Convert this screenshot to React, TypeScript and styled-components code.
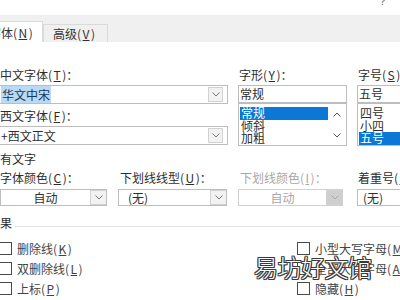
import React from "react";
import styled, { createGlobalStyle } from "styled-components";

const Global = createGlobalStyle`
  html, body { margin: 0; padding: 0; background: #fff; }
  body { width: 400px; height: 300px; overflow: hidden; }
`;

const Page = styled.div`
  position: relative;
  width: 400px;
  height: 300px;
  overflow: hidden;
  background: #fff;
  font-family: "Noto Sans CJK SC", "Noto Sans", sans-serif;
  font-size: 12px;
  color: #2e2e2e;
`;

const Dialog = styled.div`
  margin-left: -12px;
  width: 440px;
`;

const TitleBar = styled.div`
  height: 15px;
  padding-left: 391px;
  overflow: hidden;
  background: #fff;
`;

const Help = styled.span`
  display: block;
  font-family: "Liberation Sans", sans-serif;
  font-size: 13px;
  line-height: 13px;
  margin-top: -6px;
  color: #7a7a7a;
`;

const TabStrip = styled.div`
  height: 27px;
  background: #f0f0f0;
  display: flex;
  align-items: flex-end;
`;

const Tab = styled.div<{ $active?: boolean }>`
  box-sizing: border-box;
  height: ${(p) => (p.$active ? 21 : 18)}px;
  width: ${(p) => (p.$active ? 63 : 65)}px;
  margin-left: ${(p) => (p.$active ? -8 : 0)}px;
  padding-left: ${(p) => (p.$active ? 8 : 9)}px;
  background: ${(p) => (p.$active ? "#fff" : "#f0f0f0")};
  border: 1px solid #dadada;
  border-bottom: none;
  display: flex;
  align-items: center;
  white-space: nowrap;
  color: #333;
`;

const Content = styled.div`
  background: #fff;
`;

const FontGrid = styled.div`
  display: grid;
  grid-template-columns: 229px 109px 80px;
  column-gap: 10px;
  padding-left: 11px;
  padding-top: 25px;
`;

const Column = styled.div`
  display: flex;
  flex-direction: column;
`;

const Label = styled.div<{ $disabled?: boolean; $gap?: number }>`
  height: 16px;
  line-height: 16px;
  padding-left: 1px;
  margin-top: ${(p) => p.$gap ?? 0}px;
  white-space: nowrap;
  color: ${(p) => (p.$disabled ? "#a8a8a8" : "#2e2e2e")};
`;

const Combo = styled.div<{ $h: number }>`
  box-sizing: border-box;
  height: ${(p) => p.$h}px;
  margin-top: 2px;
  border: 1px solid #bdbdbd;
  display: flex;
  align-items: center;
  padding-left: 1px;
  background: #fff;
  white-space: nowrap;
  overflow: hidden;
`;

const ComboText = styled.span<{ $selected?: boolean }>`
  flex: 1;
  line-height: 14px;
  & > em {
    font-style: normal;
    background: ${(p) => (p.$selected ? "#b9d9f5" : "transparent")};
    color: ${(p) => (p.$selected ? "#16365a" : "inherit")};
    padding: 0 1px;
  }
`;

const ArrowBox = styled.div<{ $flush?: boolean; $disabled?: boolean }>`
  box-sizing: border-box;
  width: ${(p) => (p.$flush ? 16 : 15)}px;
  height: ${(p) => (p.$flush ? "100%" : "15px")};
  margin-right: ${(p) => (p.$flush ? 0 : 4)}px;
  border: 1px solid #d2d2d2;
  border-right: ${(p) => (p.$flush ? "none" : "1px solid #d2d2d2")};
  background: ${(p) => (p.$disabled ? "#cfcfcf" : "#f2f2f2")};
  display: flex;
  align-items: center;
  justify-content: center;
  flex-shrink: 0;
`;

const ListBox = styled.div`
  box-sizing: border-box;
  height: 43px;
  border: 1px solid #bdbdbd;
  display: flex;
  overflow: hidden;
`;

const ListItems = styled.div`
  flex: 1;
  padding-top: 3px;
  padding-left: 1px;
  display: flex;
  flex-direction: column;
`;

const ListItem = styled.div<{ $selected?: boolean }>`
  height: 12.5px;
  line-height: 12.5px;
  padding-left: 1px;
  white-space: nowrap;
  background: ${(p) => (p.$selected ? "#0a78d4" : "transparent")};
  color: ${(p) => (p.$selected ? "#fff" : "#2e2e2e")};
`;

const ScrollBar = styled.div`
  width: 18px;
  display: flex;
  flex-direction: column;
  align-items: center;
  justify-content: space-between;
  padding: 8px 0 7px;
  box-sizing: border-box;
`;

const GroupHeader = styled.div<{ $line?: boolean; $gap: number }>`
  display: flex;
  align-items: flex-start;
  height: 14px;
  line-height: 14px;
  margin-top: ${(p) => p.$gap}px;
  white-space: nowrap;
  &::after {
    content: "";
    display: ${(p) => (p.$line ? "block" : "none")};
    flex: 1;
    height: 1px;
    margin-top: 10px;
    margin-left: 3px;
    background: #e2e2e2;
  }
`;

const DropGrid = styled.div`
  display: grid;
  grid-template-columns: 107px 109px 108px 60px;
  column-gap: 11px;
  padding-left: 12px;
  margin-top: 5px;
`;

const DropLabel = styled.div<{ $disabled?: boolean; $shift?: number }>`
  height: 14px;
  line-height: 14px;
  white-space: nowrap;
  padding-left: ${(p) => p.$shift ?? 0}px;
  color: ${(p) => (p.$disabled ? "#a8a8a8" : "#2e2e2e")};
`;

const Drop = styled.div<{ $disabled?: boolean; $w?: number }>`
  box-sizing: border-box;
  height: 17px;
  margin-top: 4px;
  width: ${(p) => (p.$w ? `${p.$w}px` : "auto")};
  border: 1px solid ${(p) => (p.$disabled ? "#d0d0d0" : "#bdbdbd")};
  display: flex;
  align-items: center;
  background: #fff;
  white-space: nowrap;
  overflow: hidden;
  color: ${(p) => (p.$disabled ? "#a8a8a8" : "#2e2e2e")};
`;

const DropText = styled.span<{ $center?: boolean; $pad?: number }>`
  flex: 1;
  text-align: ${(p) => (p.$center ? "center" : "left")};
  padding-left: ${(p) => (p.$center ? 0 : p.$pad ?? 9)}px;
  line-height: 14px;
`;

const Effects = styled.div`
  display: grid;
  grid-template-columns: 298px 1fr;
  grid-auto-flow: column;
  grid-template-rows: repeat(4, 20px);
  padding-left: 11px;
  margin-top: 8px;
`;

const CheckRow = styled.div`
  display: flex;
  align-items: center;
  height: 20px;
  white-space: nowrap;
  color: #444;
`;

const Box = styled.span`
  box-sizing: border-box;
  width: 13px;
  height: 13px;
  border: 1px solid #4a4a4a;
  background: #fff;
  margin-right: 5px;
  flex-shrink: 0;
`;

const Access = styled.u`
  margin: 0 1.5px;
`;

const Watermark = styled.div`
  position: absolute;
  left: 254px;
  top: 252px;
  font-family: "Noto Sans CJK SC", sans-serif;
  font-weight: 300;
  font-size: 24px;
  line-height: 30px;
  letter-spacing: -0.5px;
  color: #fff;
  text-shadow: 1px 0 0 #3a3a3a, -1px 0 0 #3a3a3a, 0 1px 0 #3a3a3a, 0 -1px 0 #3a3a3a,
    1px 1px 0 #3a3a3a, -1px -1px 0 #3a3a3a, 1px -1px 0 #3a3a3a, -1px 1px 0 #3a3a3a;
  white-space: nowrap;
`;

const Chevron = ({ up, color = "#777" }: { up?: boolean; color?: string }) => (
  <svg width="8" height="5" viewBox="0 0 8 5">
    <path
      d={up ? "M0.5 4.5 L4 1 L7.5 4.5" : "M0.5 0.5 L4 4 L7.5 0.5"}
      fill="none"
      stroke={color}
      strokeWidth="1"
    />
  </svg>
);

const K = ({ c }: { c: string }) => (
  <>
    (<Access>{c}</Access>)
  </>
);

export default function App() {
  return (
    <Page>
      <Global />
      <Dialog>
        <TitleBar>
          <Help>?</Help>
        </TitleBar>
        <TabStrip>
          <Tab $active>
            字体<K c="N" />
          </Tab>
          <Tab>
            高级<K c="V" />
          </Tab>
        </TabStrip>
        <Content>
          <FontGrid>
            <Column>
              <Label>
                中文字体<K c="T" />：
              </Label>
              <Combo $h={19}>
                <ComboText $selected>
                  <em>华文中宋</em>
                </ComboText>
                <ArrowBox>
                  <Chevron />
                </ArrowBox>
              </Combo>
              <Label $gap={4}>
                西文字体<K c="F" />：
              </Label>
              <Combo $h={19}>
                <ComboText>+西文正文</ComboText>
                <ArrowBox>
                  <Chevron />
                </ArrowBox>
              </Combo>
            </Column>
            <Column>
              <Label>
                字形<K c="Y" />：
              </Label>
              <Combo $h={18}>
                <ComboText>常规</ComboText>
              </Combo>
              <ListBox>
                <ListItems>
                  <ListItem $selected>常规</ListItem>
                  <ListItem>倾斜</ListItem>
                  <ListItem>加粗</ListItem>
                </ListItems>
                <ScrollBar>
                  <Chevron up color="#555" />
                  <Chevron color="#555" />
                </ScrollBar>
              </ListBox>
            </Column>
            <Column>
              <Label>
                字号<K c="S" />：
              </Label>
              <Combo $h={18}>
                <ComboText>五号</ComboText>
              </Combo>
              <ListBox>
                <ListItems>
                  <ListItem>四号</ListItem>
                  <ListItem>小四</ListItem>
                  <ListItem $selected>五号</ListItem>
                </ListItems>
              </ListBox>
            </Column>
          </FontGrid>

          <GroupHeader $gap={6}>所有文字</GroupHeader>

          <DropGrid>
            <Column>
              <DropLabel>
                字体颜色<K c="C" />：
              </DropLabel>
              <Drop>
                <DropText $center>自动</DropText>
                <ArrowBox $flush>
                  <Chevron />
                </ArrowBox>
              </Drop>
            </Column>
            <Column>
              <DropLabel $shift={2}>
                下划线线型<K c="U" />：
              </DropLabel>
              <Drop>
                <DropText>(无)</DropText>
                <ArrowBox $flush>
                  <Chevron />
                </ArrowBox>
              </Drop>
            </Column>
            <Column>
              <DropLabel $disabled $shift={2}>
                下划线颜色<K c="I" />：
              </DropLabel>
              <Drop $disabled $w={105}>
                <DropText $center>自动</DropText>
                <ArrowBox $flush $disabled>
                  <Chevron color="#aaa" />
                </ArrowBox>
              </Drop>
            </Column>
            <Column>
              <DropLabel $shift={1}>
                着重号<K c="·" />
              </DropLabel>
              <Drop>
                <DropText $pad={5}>(无)</DropText>
              </Drop>
            </Column>
          </DropGrid>

          <GroupHeader $line $gap={10}>
            效果
          </GroupHeader>

          <Effects>
            <CheckRow>
              <Box />
              删除线<K c="K" />
            </CheckRow>
            <CheckRow>
              <Box />
              双删除线<K c="L" />
            </CheckRow>
            <CheckRow>
              <Box />
              上标<K c="P" />
            </CheckRow>
            <CheckRow>
              <Box />
              下标<K c="B" />
            </CheckRow>
            <CheckRow>
              <Box />
              小型大写字母<K c="M" />
            </CheckRow>
            <CheckRow>
              <Box />
              全部大写字母<K c="A" />
            </CheckRow>
            <CheckRow>
              <Box />
              隐藏<K c="H" />
            </CheckRow>
          </Effects>
        </Content>
      </Dialog>
      <Watermark>易坊好文馆</Watermark>
    </Page>
  );
}
